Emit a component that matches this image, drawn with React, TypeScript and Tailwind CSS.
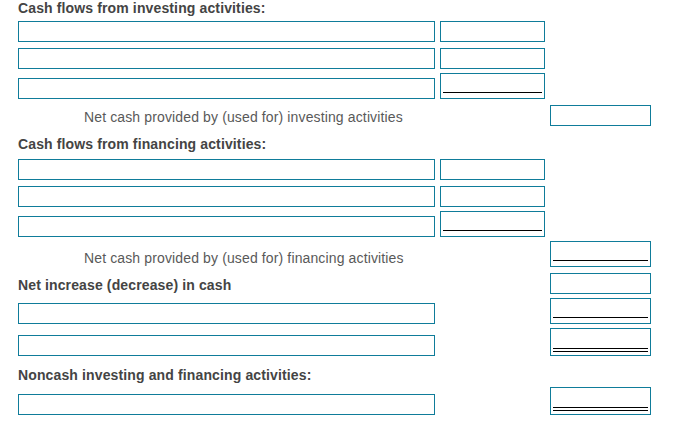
type Kind = 'plain' | 'single' | 'double';

function Box({ w, kind = 'plain' }: { w: string; kind?: Kind }) {
  if (kind === 'plain') {
    return <div className={`${w} h-[21px] border border-[#0f7c9a] bg-white`} />;
  }
  if (kind === 'single') {
    return (
      <div className={`${w} h-[26px] border border-[#0f7c9a] bg-white flex flex-col justify-end px-[2px] pb-[5px]`}>
        <div className="h-px bg-black" />
      </div>
    );
  }
  return (
    <div className={`${w} h-[28px] border border-[#0f7c9a] bg-white flex flex-col justify-end gap-[2px] px-[2px] pb-[3px]`}>
      <div className="h-px bg-black" />
      <div className="h-px bg-black" />
    </div>
  );
}

const Wide = () => <Box w="w-[417px]" />;
const Mid = ({ kind }: { kind?: Kind }) => <Box w="w-[105px]" kind={kind} />;
const Right = ({ kind }: { kind?: Kind }) => <Box w="w-[101px]" kind={kind} />;

function Row({ h, children }: { h: string; children: React.ReactNode }) {
  return <div className={`${h} grid grid-cols-[417px_105px_101px] gap-x-[5px] items-end`}>{children}</div>;
}

function Heading({ children }: { children: React.ReactNode }) {
  return <div className="col-span-3 mb-0 text-[14px] leading-[16px] font-bold text-[#444] tracking-[0.13px]">{children}</div>;
}

function Label({ children }: { children: React.ReactNode }) {
  return <div className="col-span-2 mb-[1px] pl-[66px] text-[14px] leading-[16px] text-[#595959] tracking-[0.13px]">{children}</div>;
}

export default function App() {
  return (
    <div className="w-[679px] h-[441px] overflow-hidden bg-white pl-[18px] font-['Liberation_Sans',Arial,sans-serif]">
      <Row h="h-[14px]"><Heading>Cash flows from investing activities:</Heading></Row>
      <Row h="h-[28px]"><Wide /><Mid /><div /></Row>
      <Row h="h-[27px]"><Wide /><Mid /><div /></Row>
      <Row h="h-[30px]"><Wide /><Mid kind="single" /><div /></Row>
      <Row h="h-[27px]"><Label>Net cash provided by (used for) investing activities</Label><Right /></Row>

      <Row h="h-[26px]"><Heading>Cash flows from financing activities:</Heading></Row>
      <Row h="h-[28px]"><Wide /><Mid /><div /></Row>
      <Row h="h-[27px]"><Wide /><Mid /><div /></Row>
      <Row h="h-[30px]"><Wide /><Mid kind="single" /><div /></Row>
      <Row h="h-[30px]"><Label>Net cash provided by (used for) financing activities</Label><Right kind="single" /></Row>

      <Row h="h-[27px]">
        <div className="col-span-2 mb-[1px] text-[14px] leading-[16px] font-bold text-[#444] tracking-[0.13px]">Net increase (decrease) in cash</div>
        <Right />
      </Row>
      <Row h="h-[30px]"><Wide /><div /><Right kind="single" /></Row>
      <Row h="h-[32px]"><Wide /><div /><Right kind="double" /></Row>

      <Row h="h-[27px]"><Heading>Noncash investing and financing activities:</Heading></Row>
      <Row h="h-[32px]"><Wide /><div /><Right kind="double" /></Row>
    </div>
  );
}
